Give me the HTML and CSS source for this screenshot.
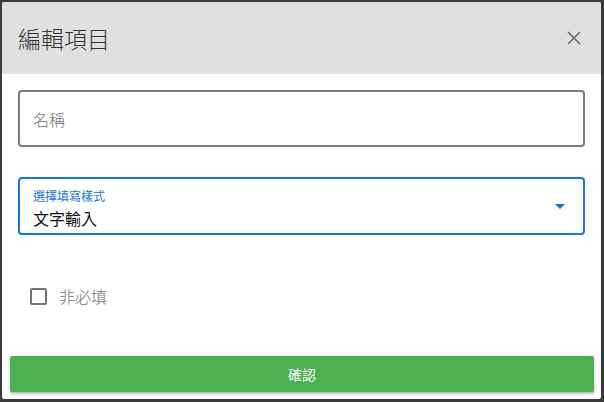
FILE: index.html
```html
<!DOCTYPE html>
<html lang="zh-Hant">
<head>
<meta charset="utf-8">
<link rel="stylesheet" href="styles.css">
</head>
<body>
<div class="dialog">
  <div class="header">
    <h1 class="title">編輯項目</h1>
    <button class="close" aria-label="close">
      <svg width="14" height="14" viewBox="0 0 14 14"><path d="M1 1L13 13M13 1L1 13" stroke="#666" stroke-width="1.5" fill="none"/></svg>
    </button>
  </div>
  <div class="content">
    <div class="field name-field">
      <span class="placeholder">名稱</span>
    </div>
    <div class="field select-field">
      <div class="select-text">
        <span class="select-label">選擇填寫樣式</span>
        <span class="select-value">文字輸入</span>
      </div>
      <span class="caret"></span>
    </div>
    <label class="check-row">
      <span class="checkbox"></span>
      <span class="check-label">非必填</span>
    </label>
  </div>
  <div class="actions">
    <button class="confirm">確認</button>
  </div>
</div>
</body>
</html>
```
FILE: styles.css
```css
html, body {
  margin: 0;
  padding: 0;
}
body {
  background: #3b3b3b;
  width: 604px;
  height: 402px;
  overflow: hidden;
  font-family: "Noto Sans CJK TC", "Noto Sans", sans-serif;
}
.dialog {
  margin: 2px;
  width: 599px;
  height: 397px;
  background: #fff;
  border-radius: 2px;
  display: flex;
  flex-direction: column;
  overflow: hidden;
}
.header {
  height: 72px;
  background: #e0e0e0;
  display: flex;
  align-items: center;
  justify-content: space-between;
  padding: 0 16px;
  flex: none;
}
.title {
  margin: 0;
  font-size: 23px;
  font-weight: 300;
  color: #333;
  line-height: 1;
}
.close {
  border: 0;
  background: transparent;
  padding: 0;
  width: 24px;
  height: 24px;
  display: flex;
  align-items: center;
  justify-content: center;
  margin-right: -1px;
}
.content {
  padding: 16px 16px 0;
  display: flex;
  flex-direction: column;
  flex: 1;
}
.field {
  box-sizing: border-box;
  width: 567px;
  border-radius: 4px;
  display: flex;
  align-items: center;
}
.name-field {
  height: 57px;
  border: 2px solid #7a7a7a;
  padding-left: 13px;
}
.placeholder {
  font-size: 16px;
  font-weight: 300;
  color: #757575;
}
.select-field {
  margin-top: 30px;
  height: 58px;
  border: 2px solid #1976d2;
  padding: 0 18px 0 13px;
  justify-content: space-between;
}
.select-text {
  display: flex;
  flex-direction: column;
  padding-top: 8px;
}
.select-label {
  font-size: 12px;
  color: #1976d2;
  line-height: 16px;
}
.select-value {
  font-size: 16px;
  color: #111;
  line-height: 28px;
}
.caret {
  width: 0;
  height: 0;
  border-left: 5px solid transparent;
  border-right: 5px solid transparent;
  border-top: 5px solid #1976d2;
}
.check-row {
  display: flex;
  align-items: center;
  margin-top: 49px;
  padding-left: 12px;
  gap: 12px;
}
.checkbox {
  box-sizing: border-box;
  width: 17px;
  height: 17px;
  border: 2px solid #757575;
  border-radius: 2px;
}
.check-label {
  font-size: 16px;
  font-weight: 300;
  color: #757575;
}
.actions {
  padding: 0 7px 7px 8px;
  flex: none;
}
.confirm {
  width: 100%;
  height: 36px;
  border: 0;
  border-radius: 2px;
  background: #4caf50;
  color: #fff;
  font-family: "Noto Sans CJK TC", "Noto Sans", sans-serif;
  font-size: 14px;
  box-shadow: 0 2px 2px rgba(0,0,0,0.2), 0 1px 4px rgba(0,0,0,0.12);
}
```
